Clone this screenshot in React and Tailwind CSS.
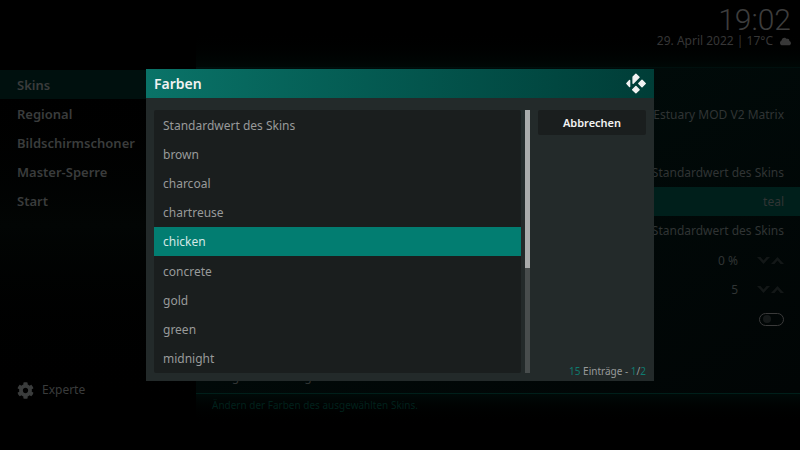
import React, { useState } from "react";
import { FaCloud, FaCog } from "react-icons/fa";

const categories = ["Skins", "Regional", "Bildschirmschoner", "Master-Sperre", "Start"];

const colors = [
  "Standardwert des Skins",
  "brown",
  "charcoal",
  "chartreuse",
  "chicken",
  "concrete",
  "gold",
  "green",
  "midnight",
];

const KodiLogo = () => (
  <svg
    width="20"
    height="21"
    viewBox="0 0 20 20.5"
    fill="#f2f2f2"
    stroke="#f2f2f2"
    strokeWidth="1.4"
    strokeLinejoin="round"
    aria-hidden="true"
  >
    <path d="M9.900 .9 13 4 7.100 10V3.700z" />
    <path d="M3.600 7.200v6L.9 10.200z" />
    <path d="M16 7l3.200 3.200-3.200 3.200-3.200-3.200z" />
    <path d="M9.900 13.200l3.200 3.200-3.200 3.200-3.200-3.200z" />
  </svg>
);

const Row = ({ active, children }) => (
  <div className={`flex flex-1 items-center justify-end px-4 pt-0.5 ${active ? "bg-[#001f1b]" : ""}`}>
    {children}
  </div>
);

const Spinner = ({ label, value }) => (
  <Row>
    <span className="mr-[19px]">{value}</span>
    <div className="flex gap-px text-[#131717]">
      <button aria-label={`${label} verringern`}>
        <svg width="13" height="7" viewBox="0 0 13 7" fill="currentColor">
          <path d="M0 0h3.500l3 3.500 3-3.500H13L6.500 7z" />
        </svg>
      </button>
      <button aria-label={`${label} erhöhen`}>
        <svg width="13" height="7" viewBox="0 0 13 7" fill="currentColor">
          <path d="M0 7h3.500l3-3.500 3 3.500H13L6.500 0z" />
        </svg>
      </button>
    </div>
  </Row>
);

const Header = () => (
  <header className="flex h-[67px] flex-col items-end bg-linear-to-b from-black from-40% to-[#000806] px-[9px] pt-2">
    <time className="font-[Roboto,sans-serif] text-[30px] leading-6 font-light text-[#3d3d3d]">19:02</time>
    <div className="mt-px flex items-center gap-[7px] text-xs text-[#363636]">
      <span>29. April 2022 | 17°C</span>
      <FaCloud size={11} className="text-[#383838]" />
    </div>
  </header>
);

const Sidebar = () => (
  <aside className="flex w-[196px] shrink-0 flex-col justify-between bg-linear-to-b from-black from-10% via-[#020504] via-50% to-black to-95% pt-[70px] text-[#3a3c3c]">
    <nav>
      {categories.map((name, i) => (
        <a
          key={name}
          href="#"
          className={`flex h-[29px] items-center pt-0.5 pl-[17px] text-[13px] font-semibold ${
            i === 0 ? "bg-[#00100e]" : ""
          }`}
        >
          {name}
        </a>
      ))}
    </nav>
    <button className="mb-[50px] flex items-center gap-2 pl-[17px] text-xs leading-5">
      <FaCog size={17} />
      Experte
    </button>
  </aside>
);

const SettingsPanel = () => (
  <main className="flex grow flex-col border-t border-[#00100e] text-xs text-[#303434]">
    <div className="flex h-[325px] flex-col bg-linear-to-br from-[#000e0c] to-[#010505] pt-[31px] pb-0.5">
      <Row>Estuary MOD V2 Matrix</Row>
      <Row />
      <Row>Standardwert des Skins</Row>
      <Row active>teal</Row>
      <Row>Standardwert des Skins</Row>
      <Spinner label="Zoom" value="0 %" />
      <Spinner label="Stärke" value="5" />
      <Row>
        <label className="flex h-[13px] w-[25px] items-center rounded-full border border-[#3a3a3a] px-[3px]">
          <input type="checkbox" aria-label="RSS-Newsfeed" className="size-2 appearance-none rounded-full bg-[#151919]" />
        </label>
      </Row>
      <Row />
      <Row>
        <button className="grow text-left">Obige Einstellungen auf Standard zurücksetzen</button>
      </Row>
    </div>
    <p className="grow border-t border-[#001f1a] bg-linear-to-b from-[#000a08] to-black to-60% px-4 pt-[3px] text-[10px] leading-4 text-[#00211c]">
      Ändern der Farben des ausgewählten Skins.
    </p>
  </main>
);

const ColorDialog = ({ selected, onSelect }) => (
  <div className="fixed inset-0 flex items-center justify-center">
    <section role="dialog" aria-label="Farben" className="w-full max-w-[508px] bg-[#232a2a]">
      <div className="flex h-[29px] items-center justify-between bg-linear-to-r from-[#0a7368] to-[#003d37] px-2">
        <h1 className="text-sm font-semibold text-[#f2f2f2]">Farben</h1>
        <KodiLogo />
      </div>
      <div className="flex px-2 pt-3 pb-1">
        <ul className="mb-1 flex h-[263px] grow flex-col overflow-hidden rounded-xs bg-[#1a1e1e]">
          {colors.map((color) => (
            <li key={color} className="flex flex-1">
              <button
                onClick={() => onSelect(color)}
                className={`w-full pt-0.5 pl-[9px] text-left text-xs ${
                  color === selected ? "bg-[#027d71] text-[#d5e8e6]" : "text-[#989a9a]"
                }`}
              >
                {color}
              </button>
            </li>
          ))}
        </ul>
        <div className="mx-1 mb-1 w-[5px] bg-[#484d4d]">
          <div className="h-3/5 bg-[#a9abab]" />
        </div>
        <div className="flex w-[112px] flex-col justify-between pl-1">
          <button className="h-[25px] rounded-xs bg-[#1a1e1e] pt-0.5 text-[11px] font-semibold text-[#f2f2f2]">
            Abbrechen
          </button>
          <p className="text-right text-[10px] leading-3 whitespace-nowrap text-[#989a9a]">
            <span className="text-[#0f7a6f]">15</span> Einträge - <span className="text-[#0f7a6f]">1</span>/
            <span className="text-[#0f7a6f]">2</span>
          </p>
        </div>
      </div>
    </section>
  </div>
);

const App = () => {
  const [selected, setSelected] = useState("chicken");

  return (
    <div className="flex min-h-screen bg-black font-['Noto_Sans',sans-serif]">
      <Sidebar />
      <div className="flex min-w-0 grow flex-col">
        <Header />
        <SettingsPanel />
      </div>
      <ColorDialog selected={selected} onSelect={setSelected} />
    </div>
  );
};

export default App;
